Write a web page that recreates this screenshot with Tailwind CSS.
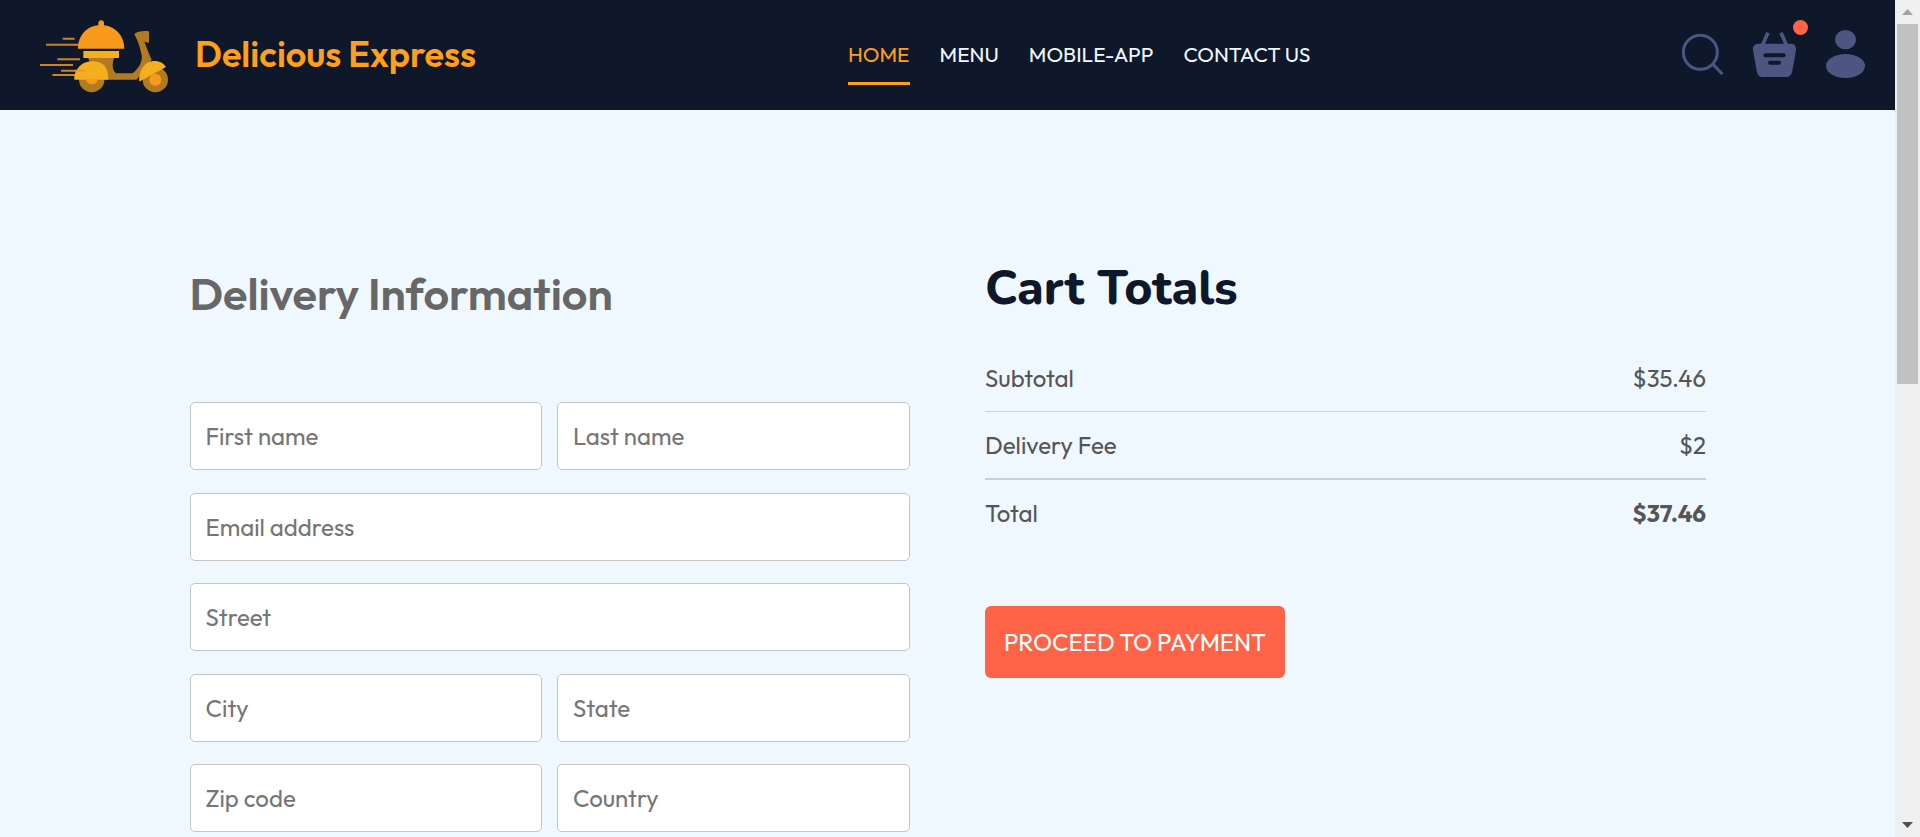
<!DOCTYPE html>
<html lang="en">
<head>
<meta charset="utf-8">
<title>Delicious Express</title>
<script src="https://cdn.jsdelivr.net/npm/@tailwindcss/browser@4"></script>
</head>
<body class="flex h-[837px] overflow-hidden bg-[#f0f8ff] font-['Outfit','Lato',sans-serif]">
<div class="flex h-full w-[1895px] flex-col">
  <header class="flex h-[110px] shrink-0 items-center bg-[#0f172a]">
    <div class="flex w-[848px] items-center pl-10">
      <svg class="h-[110px] w-[138px]" viewBox="60 0 414 330" fill="none">
        <g stroke="#c98230" stroke-width="6">
          <path d="M128 116h36M78 134h98M112 178h68M60 195h99M123 212h50M97 225h70"/>
        </g>
        <g fill="#b27b22">
          <circle cx="215" cy="239" r="38"/>
          <circle cx="406" cy="239" r="38"/>
          <path d="M203 172h80c-8 22-6 38 5 48h50c20-16 30-37 27-54-4-22-11-43-22-64 11-9 28-10 44-8v35l-14-4c8 19 14 38 22 54-14 18-28 44-46 60H250l-30-45c-12 0-10-10-17-22z"/>
        </g>
        <path d="M198 239h35a18 18 0 0 1-35 0z" fill="#f79a1d"/>
        <circle cx="406" cy="239" r="18" fill="#f79a1d"/>
        <path d="M190 153h107v21H190zM163 239v-12c8-28 27-43 54-43 36 0 48 20 48 55zM358 244c-2-31 15-61 45-61 17 0 28 7 35 18l-78 43z" fill="#f4ae1f"/>
        <path d="M163 212h34" stroke="#e59a20" stroke-width="4"/>
        <path d="M174 146c0-38 25-67 61-70v-6a8 9 0 0 1 17 0v6c36 4 61 32 61 70z" fill="#f7991c"/>
      </svg>
      <span class="ml-[17px] pb-0.5 text-[36px] leading-[44px] font-semibold whitespace-nowrap text-[#ff9f1a]">Delicious Express</span>
    </div>
    <nav class="flex gap-[30px] text-[21px] leading-[58px] whitespace-nowrap text-[#f0f8ff]">
      <a class="h-[60px] border-b-3 border-[#ff9f1a] text-[#ff9f1a]">HOME</a>
      <a class="h-[60px]">MENU</a>
      <a class="h-[60px]">MOBILE-APP</a>
      <a class="h-[60px]">CONTACT US</a>
    </nav>
    <div class="ml-auto flex items-center pr-[30px] pb-0.5">
      <svg class="mt-px h-[41px] w-[41px]" viewBox="66 102 123 123" fill="none" stroke="#4c5680" stroke-width="9">
        <circle cx="121" cy="157" r="51"/><path d="M157 191l30 31"/>
      </svg>
      <div class="relative mt-px ml-[30px]">
        <svg class="h-[45px] w-[43px]" viewBox="279 96 129 135" fill="none">
          <path d="M295 131h98c11 0 17 9 15 20l-11 61c-2 12-8 19-19 19h-69c-11 0-17-7-19-19l-11-61c-2-11 4-20 16-20z" fill="#4c5680"/>
          <path d="M308 134l16-36M379 134l-16-36" stroke="#4c5680" stroke-width="11"/>
          <path d="M316 166h55M330 188h27" stroke="#0f172a" stroke-width="12" stroke-linecap="round"/>
        </svg>
        <span class="absolute -top-3 left-10 h-[15px] w-[15px] rounded-full bg-[#ff6347]"></span>
      </div>
      <svg class="ml-[30px] h-[48px] w-[39px]" viewBox="498 90 117 144" fill="#4c5680">
        <ellipse cx="556.500" cy="119" rx="31.500" ry="29"/><ellipse cx="556.500" cy="198" rx="58.500" ry="36"/>
      </svg>
    </div>
  </header>

  <main class="flex pl-[189.5px]">
    <form class="w-[720px] shrink-0 pt-[157px] text-[24px]">
      <h1 class="text-[45px] leading-[54px] font-semibold text-[#676767]">Delivery Information</h1>
      <div class="mt-[81px] grid grid-cols-2 gap-x-[15px] gap-y-[22.500px]">
        <input class="h-[68px] w-full rounded-[5px] border border-[#c5c5c5] bg-white px-[15px] placeholder:text-[#757575]" placeholder="First name">
        <input class="h-[68px] w-full rounded-[5px] border border-[#c5c5c5] bg-white px-[15px] placeholder:text-[#757575]" placeholder="Last name">
        <input class="col-span-2 h-[68px] w-full rounded-[5px] border border-[#c5c5c5] bg-white px-[15px] placeholder:text-[#757575]" placeholder="Email address">
        <input class="col-span-2 h-[68px] w-full rounded-[5px] border border-[#c5c5c5] bg-white px-[15px] placeholder:text-[#757575]" placeholder="Street">
        <input class="h-[68px] w-full rounded-[5px] border border-[#c5c5c5] bg-white px-[15px] placeholder:text-[#757575]" placeholder="City">
        <input class="h-[68px] w-full rounded-[5px] border border-[#c5c5c5] bg-white px-[15px] placeholder:text-[#757575]" placeholder="State">
        <input class="h-[68px] w-full rounded-[5px] border border-[#c5c5c5] bg-white px-[15px] placeholder:text-[#757575]" placeholder="Zip code">
        <input class="h-[68px] w-full rounded-[5px] border border-[#c5c5c5] bg-white px-[15px] placeholder:text-[#757575]" placeholder="Country">
      </div>
    </form>
    <section class="ml-[75.5px] w-[721px] shrink-0 pt-[148px] text-[24px] text-[#555]">
      <h2 class="font-['Nunito','Lato',sans-serif] text-[48px] leading-[60px] font-extrabold text-[#0f172a]">Cart Totals</h2>
      <div class="mt-[45px] flex h-[30px] items-center justify-between"><span>Subtotal</span><span>$35.46</span></div>
      <hr class="mt-[18px] border-t border-[#cfd1da]">
      <div class="mt-[18px] flex h-[30px] items-center justify-between"><span>Delivery Fee</span><span>$2</span></div>
      <hr class="mt-[18px] border-t-2 border-[#cccdd5]">
      <div class="mt-[18px] flex h-[30px] items-center justify-between"><span>Total</span><b class="font-bold">$37.46</b></div>
      <button class="mt-[78px] flex h-[72px] w-[300px] items-center justify-center rounded-[6px] bg-[#ff6347] whitespace-nowrap text-white">PROCEED TO PAYMENT</button>
    </section>
  </main>
</div>

<aside class="flex h-full w-[25px] flex-col items-center bg-[#f0f0f0]">
  <svg class="h-6 w-[25px] shrink-0" viewBox="0 0 25 24" fill="#a3a3a3"><path d="M7 15l5.500-6 5.500 6z"/></svg>
  <div class="h-[360px] w-[21px] bg-[#c1c1c1]"></div>
  <svg class="mt-auto h-6 w-[25px] shrink-0" viewBox="0 0 25 24" fill="#505050"><path d="M7 9h11l-5.500 6z"/></svg>
</aside>
</body>
</html>
